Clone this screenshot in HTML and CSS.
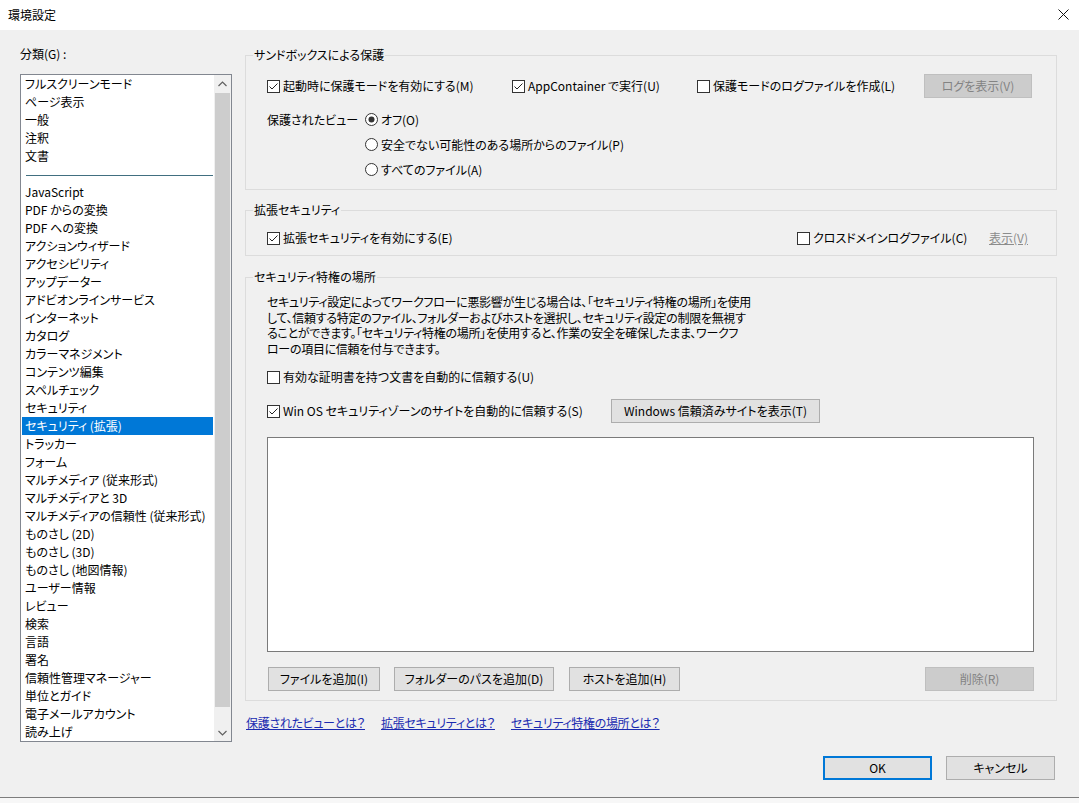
FILE: index.html
```html
<!DOCTYPE html>
<html lang="ja">
<head>
<meta charset="utf-8">
<title>環境設定</title>
<link rel="stylesheet" href="styles.css">
</head>
<body>
<div class="window">
  <div class="titlebar">
    <span class="title">環境設定</span>
    <span class="close"><svg width="11" height="11" viewBox="0 0 11 11"><path d="M0.5 0.5 L10.5 10.5 M10.5 0.5 L0.5 10.5" stroke="#111" stroke-width="1" fill="none"/></svg></span>
  </div>
  <div class="body">
    <div class="content">
      <div class="sidebar">
        <div class="cat-label">分類(G) :</div>
        <div class="listbox">
          <ul class="items">
            <li>フルスクリーンモード</li>
            <li>ページ表示</li>
            <li>一般</li>
            <li>注釈</li>
            <li>文書</li>
            <li class="sep"><span></span></li>
            <li>JavaScript</li>
            <li>PDF からの変換</li>
            <li>PDF への変換</li>
            <li>アクションウィザード</li>
            <li>アクセシビリティ</li>
            <li>アップデーター</li>
            <li>アドビオンラインサービス</li>
            <li>インターネット</li>
            <li>カタログ</li>
            <li>カラーマネジメント</li>
            <li>コンテンツ編集</li>
            <li>スペルチェック</li>
            <li>セキュリティ</li>
            <li class="selected">セキュリティ (拡張)</li>
            <li>トラッカー</li>
            <li>フォーム</li>
            <li>マルチメディア (従来形式)</li>
            <li>マルチメディアと 3D</li>
            <li>マルチメディアの信頼性 (従来形式)</li>
            <li>ものさし (2D)</li>
            <li>ものさし (3D)</li>
            <li>ものさし (地図情報)</li>
            <li>ユーザー情報</li>
            <li>レビュー</li>
            <li>検索</li>
            <li>言語</li>
            <li>署名</li>
            <li>信頼性管理マネージャー</li>
            <li>単位とガイド</li>
            <li>電子メールアカウント</li>
            <li>読み上げ</li>
          </ul>
          <div class="scrollbar">
            <div class="sb-btn"><svg width="9" height="6" viewBox="0 0 9 6"><path d="M0.5 5 L4.5 1 L8.5 5" stroke="#606060" stroke-width="1.2" fill="none"/></svg></div>
            <div class="sb-thumb"></div>
            <div class="sb-track"></div>
            <div class="sb-btn"><svg width="9" height="6" viewBox="0 0 9 6"><path d="M0.5 1 L4.5 5 L8.5 1" stroke="#606060" stroke-width="1.2" fill="none"/></svg></div>
          </div>
        </div>
      </div>

      <div class="panel">
        <fieldset class="group g1">
          <legend>サンドボックスによる保護</legend>
          <div class="row row-sandbox">
            <label class="check"><svg class="box" width="13" height="13" viewBox="0 0 13 13"><rect x="0.5" y="0.5" width="12" height="12" fill="#fff" stroke="#333"/><path d="M2.5 6.5 L5 9 L10.5 3.5" stroke="#222" stroke-width="1" fill="none"/></svg><span>起動時に保護モードを有効にする(M)</span></label>
            <label class="check"><svg class="box" width="13" height="13" viewBox="0 0 13 13"><rect x="0.5" y="0.5" width="12" height="12" fill="#fff" stroke="#333"/><path d="M2.5 6.5 L5 9 L10.5 3.5" stroke="#222" stroke-width="1" fill="none"/></svg><span>AppContainer で実行(U)</span></label>
            <label class="check"><svg class="box" width="13" height="13" viewBox="0 0 13 13"><rect x="0.5" y="0.5" width="12" height="12" fill="#fff" stroke="#333"/></svg><span>保護モードのログファイルを作成(L)</span></label>
            <button class="btn disabled btn-log">ログを表示(V)</button>
          </div>
          <div class="view-grid">
            <div class="view-label">保護されたビュー</div>
            <div class="radios">
              <label class="radio"><svg width="13" height="13" viewBox="0 0 13 13"><circle cx="6.5" cy="6.5" r="6" fill="#fff" stroke="#333"/><circle cx="6.5" cy="6.5" r="3" fill="#333"/></svg><span>オフ(O)</span></label>
              <label class="radio"><svg width="13" height="13" viewBox="0 0 13 13"><circle cx="6.5" cy="6.5" r="6" fill="#fff" stroke="#333"/></svg><span>安全でない可能性のある場所からのファイル(P)</span></label>
              <label class="radio"><svg width="13" height="13" viewBox="0 0 13 13"><circle cx="6.5" cy="6.5" r="6" fill="#fff" stroke="#333"/></svg><span>すべてのファイル(A)</span></label>
            </div>
          </div>
        </fieldset>

        <fieldset class="group g2">
          <legend>拡張セキュリティ</legend>
          <div class="row row-ext">
            <label class="check"><svg class="box" width="13" height="13" viewBox="0 0 13 13"><rect x="0.5" y="0.5" width="12" height="12" fill="#fff" stroke="#333"/><path d="M2.5 6.5 L5 9 L10.5 3.5" stroke="#222" stroke-width="1" fill="none"/></svg><span>拡張セキュリティを有効にする(E)</span></label>
            <label class="check"><svg class="box" width="13" height="13" viewBox="0 0 13 13"><rect x="0.5" y="0.5" width="12" height="12" fill="#fff" stroke="#333"/></svg><span>クロスドメインログファイル(C)</span></label>
            <span class="link-disabled">表示(V)</span>
          </div>
        </fieldset>

        <fieldset class="group g3">
          <legend>セキュリティ特権の場所</legend>
          <p class="desc">セキュリティ設定によってワークフローに悪影響が生じる場合は、「セキュリティ特権の場所」を使用<br>して、信頼する特定のファイル、フォルダーおよびホストを選択し、セキュリティ設定の制限を無視す<br>ることができます。「セキュリティ特権の場所」を使用すると、作業の安全を確保したまま、ワークフ<br>ローの項目に信頼を付与できます。</p>
          <div class="row row-cert">
            <label class="check"><svg class="box" width="13" height="13" viewBox="0 0 13 13"><rect x="0.5" y="0.5" width="12" height="12" fill="#fff" stroke="#333"/></svg><span>有効な証明書を持つ文書を自動的に信頼する(U)</span></label>
          </div>
          <div class="row row-win">
            <label class="check"><svg class="box" width="13" height="13" viewBox="0 0 13 13"><rect x="0.5" y="0.5" width="12" height="12" fill="#fff" stroke="#333"/><path d="M2.5 6.5 L5 9 L10.5 3.5" stroke="#222" stroke-width="1" fill="none"/></svg><span>Win OS セキュリティゾーンのサイトを自動的に信頼する(S)</span></label>
            <button class="btn btn-win">Windows 信頼済みサイトを表示(T)</button>
          </div>
          <div class="paths"></div>
          <div class="row row-actions">
            <button class="btn btn-file">ファイルを追加(I)</button>
            <button class="btn btn-folder">フォルダーのパスを追加(D)</button>
            <button class="btn btn-host">ホストを追加(H)</button>
            <button class="btn disabled btn-del">削除(R)</button>
          </div>
        </fieldset>

        <div class="links">
          <a href="#">保護されたビューとは？</a>
          <a href="#">拡張セキュリティとは？</a>
          <a href="#">セキュリティ特権の場所とは？</a>
        </div>
      </div>
    </div>
    <div class="footer">
      <button class="btn btn-ok">OK</button>
      <button class="btn btn-cancel">キャンセル</button>
    </div>
  </div>
</div>
</body>
</html>
```

FILE: styles.css
```css
* { box-sizing: border-box; }

html, body {
  margin: 0;
  padding: 0;
  background: #f7f7f7;
}

body {
  font-family: "Noto Sans CJK JP", "Noto Sans", sans-serif;
  font-size: 12px;
  font-feature-settings: "palt";
  color: #000;
  line-height: 16px;
}

.window {
  width: 1079px;
  height: 798px;
  border-bottom: 1px solid #7d7d7d;
  background: #f0f0f0;
}

.titlebar {
  height: 30px;
  background: #fff;
  display: flex;
  align-items: center;
  justify-content: space-between;
  padding: 0 10px 0 8px;
}

.title {
  font-size: 12px;
  line-height: 16px;
}

.close {
  display: flex;
  width: 11px;
  height: 11px;
  margin-top: -1px;
}

.body {
  height: 767px;
}

.content {
  display: flex;
  align-items: flex-start;
}

/* ---------- sidebar ---------- */
.sidebar {
  width: 232px;
  padding: 16px 0 0 20px;
}

.cat-label {
  height: 16px;
  line-height: 16px;
}

.listbox {
  margin-top: 12px;
  height: 668px;
  border: 1px solid #828790;
  background: #fff;
  display: flex;
}

.items {
  list-style: none;
  margin: 0 0 0 1px;
  padding: 0;
  width: 192px;
  overflow: hidden;
}

.items li {
  height: 18px;
  line-height: 18px;
  padding-left: 3px;
  white-space: nowrap;
}

.items li.selected {
  background: #0078d7;
  color: #fff;
}

.items li.sep {
  display: flex;
  align-items: center;
  padding-left: 4px;
}

.items li.sep span {
  display: block;
  width: 188px;
  height: 1px;
  background: #416f80;
  margin-top: 2px;
}

.scrollbar {
  width: 17px;
  margin-left: 1px;
  background: #f0f0f0;
  display: flex;
  flex-direction: column;
}

.sb-btn {
  height: 17px;
  display: flex;
  align-items: center;
  justify-content: center;
  background: #f0f0f0;
}

.sb-thumb {
  height: 614px;
  margin: 1px 1px 0 1px;
  background: #cdcdcd;
}

.sb-track {
  flex: 1;
}

/* ---------- panel ---------- */
.panel {
  width: 812px;
  margin-left: 13px;
  padding-top: 17px;
}

.group {
  margin: 0;
  padding: 0 22px 0 21px;
  border: 1px solid #dcdcdc;
  min-width: 0;
}

.group legend {
  margin-left: -14px;
  padding: 0 1px;
  height: 16px;
  line-height: 16px;
}

.g2 { margin-top: 12px; }
.g3 { margin-top: 13px; }

.row {
  display: grid;
  align-items: center;
  height: 24px;
}

.check, .radio {
  display: flex;
  align-items: center;
  white-space: nowrap;
}

.check svg, .radio svg {
  flex: none;
  margin-right: 3px;
}

/* group 1 */
.row-sandbox {
  margin-top: 11px;
  grid-template-columns: 245px 185px 227px 108px;
}

.view-grid {
  margin-top: 9px;
  display: grid;
  grid-template-columns: 98px auto;
  padding-bottom: 7px;
}

.view-label {
  height: 25px;
  line-height: 25px;
}

.radios {
  display: flex;
  flex-direction: column;
}

.radio {
  height: 25px;
}

/* group 2 */
.row-ext {
  margin-top: 8px;
  margin-bottom: 5px;
  grid-template-columns: 530px 192px auto;
}

.link-disabled {
  color: #8c8c8c;
  text-decoration: underline;
  white-space: nowrap;
}

/* group 3 */
.desc {
  margin: 9px 0 0 0;
  line-height: 15.5px;
  letter-spacing: -0.3px;
  white-space: nowrap;
}

.row-cert {
  margin-top: 9px;
}

.row-win {
  margin-top: 10px;
  grid-template-columns: 344px 209px;
}

.paths {
  margin-top: 14px;
  height: 215px;
  border: 1px solid #7a7a7a;
  background: #fff;
}

.row-actions {
  margin-top: 15px;
  margin-bottom: 9px;
  display: flex;
  padding-left: 1px;
}

/* buttons */
.btn {
  font-family: inherit;
  font-size: 12px;
  font-feature-settings: "palt";
  height: 24px;
  line-height: 16px;
  padding: 0;
  background: #e1e1e1;
  border: 1px solid #adadad;
  color: #000;
  white-space: nowrap;
}

.btn.disabled {
  background: #cccccc;
  border-color: #bfbfbf;
  color: #838383;
}

.btn-log { width: 108px; }
.btn-win { width: 209px; }
.btn-file { width: 112px; }
.btn-folder { width: 160px; margin-left: 14px; }
.btn-host { width: 111px; margin-left: 15px; }
.btn-del { width: 109px; margin-left: auto; }

/* links */
.links {
  margin-top: 14px;
  padding-left: 1px;
  display: flex;
  gap: 16px;
  line-height: 16px;
  letter-spacing: -0.3px;
}

.links a {
  color: #1b2bb0;
  text-decoration: underline;
  white-space: nowrap;
}

/* footer */
.footer {
  display: flex;
  justify-content: flex-end;
  gap: 14px;
  padding-right: 24px;
  margin-top: 14px;
}

.btn-ok {
  width: 109px;
  height: 24px;
  border: 2px solid #0078d7;
}

.btn-cancel {
  width: 109px;
  height: 24px;
}
```
